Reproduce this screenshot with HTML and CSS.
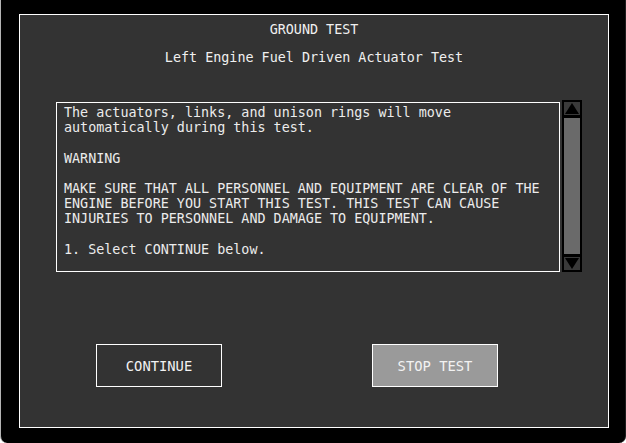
FILE: index.html
```html
<!DOCTYPE html>
<html>
<head>
<meta charset="utf-8">
<link rel="stylesheet" href="styles.css">
</head>
<body>
<div class="bezel">
  <div class="panel">
    <div class="title">GROUND TEST</div>
    <div class="subtitle">Left Engine Fuel Driven Actuator Test</div>
    <div class="content-row">
      <div class="textbox">
        <p class="line">The actuators, links, and unison rings will move</p>
        <p class="line">automatically during this test.</p>
        <p class="line blank"></p>
        <p class="line">WARNING</p>
        <p class="line blank"></p>
        <p class="line">MAKE SURE THAT ALL PERSONNEL AND EQUIPMENT ARE CLEAR OF THE</p>
        <p class="line">ENGINE BEFORE YOU START THIS TEST. THIS TEST CAN CAUSE</p>
        <p class="line">INJURIES TO PERSONNEL AND DAMAGE TO EQUIPMENT.</p>
        <p class="line blank"></p>
        <p class="line">1. Select CONTINUE below.</p>
      </div>
      <div class="scrollbar">
        <div class="arrow">
          <svg width="14" height="11" viewBox="0 0 14 11"><polygon points="7,0 14,11 0,11" fill="#000"/></svg>
        </div>
        <div class="track"></div>
        <div class="arrow">
          <svg width="14" height="11" viewBox="0 0 14 11"><polygon points="0,0 14,0 7,11" fill="#000"/></svg>
        </div>
      </div>
    </div>
    <div class="buttons">
      <div class="btn btn-continue">CONTINUE</div>
      <div class="btn btn-stop">STOP TEST</div>
    </div>
  </div>
</div>
</body>
</html>
```
FILE: styles.css
```css
html {
  background: #ffffff;
}
body {
  margin: 0;
  font-family: "DejaVu Sans Mono", "Liberation Mono", monospace;
  font-size: 13.4px;
  color: #f0f0f0;
}
.bezel {
  box-sizing: border-box;
  width: 626px;
  height: 443px;
  background: #000;
  border-left: 1px solid #b4b4b4;
  border-right: 1px solid #1e1e1e;
  border-radius: 0 0 7px 7px;
  padding-top: 14px;
  padding-left: 18px;
}
.panel {
  box-sizing: border-box;
  width: 590px;
  height: 414px;
  background: #333333;
  border: 1px solid #ffffff;
  padding-top: 7px;
}
.title,
.subtitle {
  text-align: center;
  line-height: 15px;
  height: 15px;
}
.subtitle {
  margin-top: 13px;
}
.content-row {
  display: flex;
  align-items: flex-start;
  margin-top: 35px;
  margin-left: 36px;
  gap: 2px;
}
.textbox {
  box-sizing: border-box;
  width: 504px;
  height: 170px;
  margin-top: 2px;
  border: 1px solid #ffffff;
  padding: 2px 7px;
  color: #ececec;
}
.line {
  margin: 0;
  height: 15.2px;
  line-height: 15.2px;
  white-space: pre;
}
.scrollbar {
  box-sizing: border-box;
  width: 20px;
  height: 172px;
  display: flex;
  flex-direction: column;
  background: #000;
}
.arrow {
  box-sizing: border-box;
  height: 17px;
  background: #3a3a3a;
  border: 2px solid #000;
  display: flex;
  align-items: center;
  justify-content: center;
}
.track {
  box-sizing: border-box;
  flex: 1;
  background: #6a6a6a;
  border: 2px solid #000;
  border-top-width: 1px;
  border-bottom-width: 1px;
}
.buttons {
  display: flex;
  margin-top: 72px;
  margin-left: 76px;
  gap: 150px;
}
.btn {
  box-sizing: border-box;
  width: 126px;
  height: 43px;
  border: 1px solid #ffffff;
  display: flex;
  align-items: center;
  justify-content: center;
  color: #f2f2f2;
  font-size: 13.8px;
}
.btn-continue {
  background: #333333;
}
.btn-stop {
  background: #9a9a9a;
}
```
